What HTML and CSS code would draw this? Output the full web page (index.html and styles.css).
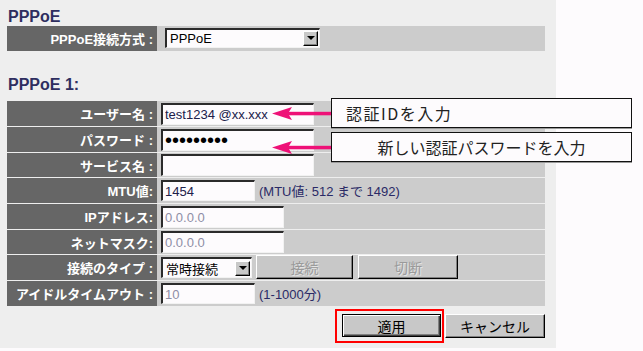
FILE: index.html
```html
<!DOCTYPE html>
<html lang="ja">
<head>
    <meta charset="UTF-8">
    <title>PPPoE</title>
    <link rel="stylesheet" href="styles.css">
</head>
<body>
    <div class="page">
        <h2 class="sec-title">PPPoE</h2>
        <div class="form">
            <div class="lbl">PPPoE接続方式 :</div>
            <div class="val">
                <div class="select select-mode">
                    <span class="select-text">PPPoE</span>
                    <span class="select-btn"><i class="tri"></i></span>
                </div>
            </div>
        </div>

        <h2 class="sec-title second">PPPoE 1:</h2>
        <div class="form form-main">
            <div class="lbl">ユーザー名 :</div>
            <div class="val"><input class="field w-long" type="text" value="test1234 @xx.xxx"></div>

            <div class="lbl">パスワード :</div>
            <div class="val"><input class="field w-long pw" type="password" value="123456789"></div>

            <div class="lbl">サービス名 :</div>
            <div class="val"><input class="field w-long" type="text" value=""></div>

            <div class="lbl">MTU値:</div>
            <div class="val">
                <input class="field w-short" type="text" value="1454">
                <span class="hint">(MTU値: 512 まで 1492)</span>
            </div>

            <div class="lbl">IPアドレス:</div>
            <div class="val"><input class="field w-mid off" type="text" value="0.0.0.0"></div>

            <div class="lbl">ネットマスク:</div>
            <div class="val"><input class="field w-mid off" type="text" value="0.0.0.0"></div>

            <div class="lbl">接続のタイプ :</div>
            <div class="val">
                <div class="select select-type">
                    <span class="select-text">常時接続</span>
                    <span class="select-btn"><i class="tri"></i></span>
                </div>
                <button class="btn btn-connect" disabled>接続</button>
                <button class="btn btn-cut" disabled>切断</button>
            </div>

            <div class="lbl">アイドルタイムアウト :</div>
            <div class="val">
                <input class="field w-short off" type="text" value="10">
                <span class="hint">(1-1000分)</span>
            </div>
        </div>

        <div class="actions">
            <div class="apply-mark"><button class="btn btn-apply">適用</button></div>
            <button class="btn btn-cancel">キャンセル</button>
        </div>

        <!-- callouts -->
        <svg class="arrows" width="64" height="50" viewBox="0 0 64 50">
            <path d="M4 9.5 L24 3 L20 9.5 L24 16 Z" fill="#ee1177"/>
            <rect x="19" y="7.8" width="45" height="3.5" fill="#ee1177"/>
            <path d="M4 43.5 L24 37 L20 43.5 L24 50 Z" fill="#ee1177"/>
            <rect x="19" y="41.8" width="45" height="3.5" fill="#ee1177"/>
        </svg>
        <div class="note note-id">認証IDを入力</div>
        <div class="note note-pw">新しい認証パスワードを入力</div>
    </div>
</body>
</html>
```

FILE: styles.css
```css
body {
    margin: 0;
    background-color: #fdfbfd;
    font-family: "Liberation Sans", "Noto Sans CJK JP", sans-serif;
}
.page {
    position: relative;
    width: 556px;
    height: 348px;
    background-color: #eeeeee;
}
.sec-title {
    margin: 0;
    padding: 8px 0 0 8px;
    font-size: 16px;
    line-height: 18px;
    color: #2e2e60;
}
.sec-title.second {
    padding: 25px 0 7px 8px;
}
.form {
    margin-left: 7px;
    width: 538px;
    display: grid;
    grid-template-columns: 150px 1fr;
    grid-auto-rows: 25px;
    row-gap: 1px;
}
.form-main {
    grid-template-rows: 25px 25px 24px 25px 25px 24px 25px 25px;
}
.lbl {
    display: flex;
    align-items: center;
    justify-content: flex-end;
    padding-right: 4px;
    background-color: #666666;
    color: #ffffff;
    font-family: "Liberation Sans", "Noto Sans CJK JP", sans-serif;
    font-weight: bold;
    font-size: 13px;
    white-space: nowrap;
}
.val {
    display: flex;
    align-items: center;
    gap: 4px;
    padding-left: 4px;
    background-color: #cccccc;
}
.field {
    box-sizing: border-box;
    height: 22px;
    margin: 0;
    padding: 0 2px;
    border-style: solid;
    border-width: 2px 1px 1px 2px;
    border-color: #2b2b2b #f2f2f2 #f2f2f2 #2b2b2b;
    background-color: #fdfbfd;
    font-family: "Liberation Sans", "Noto Sans CJK JP", sans-serif;
    font-size: 13px;
    color: #20204a;
    outline: none;
}
.w-long {
    width: 153px;
}
.w-mid {
    width: 123px;
}
.w-short {
    width: 94px;
    height: 21px;
}
.off {
    color: #8e8ea6;
}
.pw {
    font-size: 20px;
    letter-spacing: 0;
    color: #000000;
}
.hint {
    font-size: 13px;
    color: #2a2a66;
    white-space: nowrap;
}
.select {
    box-sizing: border-box;
    display: flex;
    align-items: center;
    height: 21px;
    border-style: solid;
    border-width: 2px 1px 1px 2px;
    border-color: #2b2b2b #f2f2f2 #f2f2f2 #2b2b2b;
    background-color: #fdfbfd;
}
.select-mode {
    width: 155px;
    height: 20px;
    margin-left: 4px;
    margin-top: -2px;
}
.select-type {
    width: 91px;
}
.select-text {
    flex: 1;
    padding-left: 3px;
    font-size: 13px;
    color: #000000;
}
.select-btn {
    box-sizing: border-box;
    display: flex;
    align-items: center;
    justify-content: center;
    width: 15px;
    height: 15px;
    margin-right: 1px;
    background-color: #c8c8c8;
    border: 1px solid;
    border-color: #ffffff #000000 #000000 #ffffff;
    box-shadow: inset -1px -1px #808080;
}
.tri {
    width: 0;
    height: 0;
    border-left: 4px solid transparent;
    border-right: 4px solid transparent;
    border-top: 4px solid #000000;
}
.btn {
    box-sizing: border-box;
    height: 24px;
    padding: 0;
    background-color: #c8c8c8;
    border: 1px solid;
    border-color: #ffffff #000000 #000000 #ffffff;
    box-shadow: inset -1px -1px #808080;
    font-family: "Noto Sans CJK JP", sans-serif;
    font-size: 14px;
    color: #000000;
}
.btn:disabled {
    color: #9a9a9a;
    text-shadow: 1px 1px #e4e4e4;
}
.btn-connect {
    width: 97px;
    margin-top: -1px;
}
.btn-cut {
    width: 100px;
    margin-top: -1px;
    margin-left: 1px;
}
.actions {
    display: flex;
    justify-content: flex-end;
    align-items: flex-start;
    margin-top: 3px;
    padding-right: 11px;
}
.apply-mark {
    display: flex;
    padding: 3px 1px 4px 5px;
    border: 2px solid #ff0000;
}
.btn-apply {
    width: 99px;
    height: 23px;
    border-color: #000000;
    box-shadow: inset 1px 1px #ffffff, inset -1px -1px #404040, inset -2px -2px #808080;
}
.btn-cancel {
    width: 100px;
    margin-top: 5px;
    margin-left: 1px;
}
.arrows {
    position: absolute;
    left: 268px;
    top: 104px;
}
.note {
    position: absolute;
    left: 331px;
    box-sizing: border-box;
    display: flex;
    align-items: center;
    width: 301px;
    height: 30px;
    border: 1px solid #111111;
    box-shadow: 0 1px 0 #999999;
    background-color: #fdfbfd;
    font-family: "Noto Sans CJK JP", sans-serif;
    font-size: 16px;
    color: #222222;
}
.note-id {
    top: 98px;
    padding-left: 14px;
    letter-spacing: 1.5px;
}
.note-pw {
    top: 132px;
    justify-content: center;
}
```
